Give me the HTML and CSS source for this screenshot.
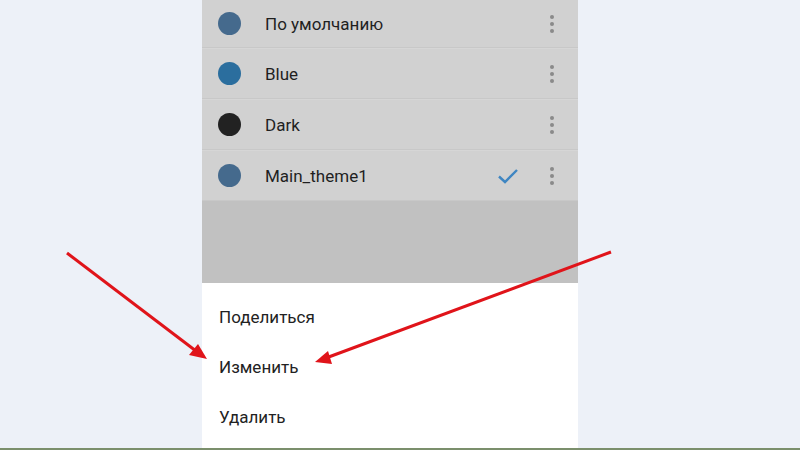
FILE: index.html
```html
<!DOCTYPE html>
<html lang="ru">
  <head>
    <meta charset="UTF-8" />
    <meta name="viewport" content="width=device-width, initial-scale=1.0" />
    <title>Темы</title>
    <link rel="stylesheet" href="styles.css">
  </head>
  <body>
    <div class="page">
      <div class="phone">
        <!-- Theme list (dimmed behind sheet) -->
        <ul class="theme-list">
          <li class="theme-row">
            <span class="dot dot-default"></span>
            <span class="theme-name">По умолчанию</span>
            <span class="kebab"><i></i><i></i><i></i></span>
          </li>
          <li class="theme-row">
            <span class="dot dot-blue"></span>
            <span class="theme-name">Blue</span>
            <span class="kebab"><i></i><i></i><i></i></span>
          </li>
          <li class="theme-row">
            <span class="dot dot-dark"></span>
            <span class="theme-name">Dark</span>
            <span class="kebab"><i></i><i></i><i></i></span>
          </li>
          <li class="theme-row">
            <span class="dot dot-default"></span>
            <span class="theme-name">Main_theme1</span>
            <svg class="check" width="22" height="16" viewBox="0 0 22 16">
              <path d="M2 8.5 L8 14 L20 2" fill="none" stroke="#3f86c2" stroke-width="2.4" />
            </svg>
            <span class="kebab"><i></i><i></i><i></i></span>
          </li>
        </ul>
        <div class="dim-space"></div>

        <!-- Bottom sheet -->
        <ul class="sheet">
          <li class="sheet-item">Поделиться</li>
          <li class="sheet-item">Изменить</li>
          <li class="sheet-item">Удалить</li>
        </ul>
      </div>

      <!-- Annotation arrows -->
      <svg class="arrows" width="800" height="450" viewBox="0 0 800 450">
        <line x1="67" y1="253" x2="196" y2="351" stroke="#e0141a" stroke-width="3" />
        <polygon points="207,359 189,355 198,344" fill="#e0141a" />
        <line x1="611" y1="252" x2="326" y2="358" stroke="#e0141a" stroke-width="3" />
        <polygon points="315,362 328,351 332,364" fill="#e0141a" />
      </svg>
    </div>
  </body>
</html>
```

FILE: styles.css
```css
/* Basic Styles */
body {
  margin: 0;
  padding: 0;
  font-family: Roboto, "Noto Sans", sans-serif;
  background-color: #edf1f8;
  overflow: hidden;
}

ul {
  list-style: none;
  margin: 0;
  padding: 0;
}

.page {
  position: relative;
  height: 448px;
  border-bottom: 2px solid #7b8f6c;
}

.phone {
  width: 376px;
  height: 448px;
  margin-left: 202px;
  display: flex;
  flex-direction: column;
}

/* Theme list */
.theme-list {
  background-color: #d1d1d1;
}

.theme-row {
  display: flex;
  align-items: center;
  height: 49px;
  padding: 0 24px 0 16px;
  border-bottom: 1px solid #c8c8c8;
  border-top: 1px solid #d6d6d6;
}

.theme-row:first-child {
  height: 47px;
  border-top: none;
}

.dot {
  width: 23px;
  height: 23px;
  border-radius: 50%;
  margin-right: 24px;
  flex-shrink: 0;
}

.dot-default {
  background-color: #456a8d;
}

.dot-blue {
  background-color: #2b6e9e;
}

.dot-dark {
  background-color: #222222;
}

.theme-name {
  flex: 1;
  font-size: 17px;
  color: #1f1f1f;
}

.check {
  margin-right: 31px;
}

.kebab {
  display: flex;
  flex-direction: column;
  gap: 3px;
}

.kebab i {
  width: 4px;
  height: 4px;
  border-radius: 50%;
  background-color: #8a8a8a;
}

.dim-space {
  height: 82px;
  background-color: #c1c1c1;
}

/* Bottom sheet */
.sheet {
  flex: 1;
  background-color: #fff;
  padding-top: 9px;
}

.sheet-item {
  height: 50px;
  line-height: 50px;
  padding-left: 17px;
  font-size: 17px;
  color: #222;
}

.arrows {
  position: absolute;
  left: 0;
  top: 0;
  pointer-events: none;
}
```
